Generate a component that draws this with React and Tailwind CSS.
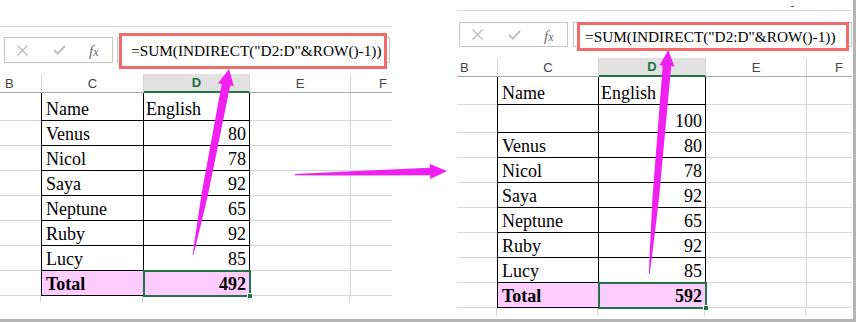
import React from 'react';

const MAGENTA = '#f020f0';

// Builds a tapered arrow outline: a shaft that widens along a width profile, then a head.
function arrowPoints(tail, tip, headLen, headHalf, profile) {
  const dx = tip[0] - tail[0];
  const dy = tip[1] - tail[1];
  const L = Math.hypot(dx, dy);
  const ux = dx / L;
  const uy = dy / L;
  const nx = -uy;
  const ny = ux;
  const shaftLen = L - headLen;
  const a = [];
  const b = [];
  profile.forEach(([t, w]) => {
    const cx = tail[0] + ux * shaftLen * t;
    const cy = tail[1] + uy * shaftLen * t;
    a.push([cx + (nx * w) / 2, cy + (ny * w) / 2]);
    b.push([cx - (nx * w) / 2, cy - (ny * w) / 2]);
  });
  const bx = tail[0] + ux * shaftLen;
  const by = tail[1] + uy * shaftLen;
  const pts = [
    ...a,
    [bx + nx * headHalf, by + ny * headHalf],
    tip,
    [bx - nx * headHalf, by - ny * headHalf],
    ...b.reverse(),
  ];
  return pts.map((p) => p.map((v) => v.toFixed(1)).join(',')).join(' ');
}

function CancelIcon() {
  return (
    <svg width="11" height="11" viewBox="0 0 11 11">
      <path d="M0.5 0.5L10.5 10.5M10.5 0.5L0.5 10.5" stroke="#b8b8b8" strokeWidth="1.3" fill="none" />
    </svg>
  );
}

function EnterIcon() {
  return (
    <svg width="13" height="10" viewBox="0 0 13 10">
      <path d="M1 5L4.8 8.6L12 1" stroke="#c0c0c0" strokeWidth="2" fill="none" />
    </svg>
  );
}

function FxIcon() {
  return (
    <span className="font-['Liberation_Serif',serif] italic text-[15px] leading-none text-[#6a6a6a]">
      f<span className="text-[12px]">x</span>
    </span>
  );
}

const FORMULA = '=SUM(INDIRECT("D2:D"&ROW()-1))';

function Sheet({ s, rows }) {
  return (
    <div className={`${s.width} flex flex-col shrink-0`}>
      {s.top}
      <div className="h-px bg-[#dadada]" />

      {/* formula bar */}
      <div className={`relative flex ${s.bar}`}>
        <div className="w-[109px] h-full border border-[#c6c6c6] flex items-center pl-[12px]">
          <CancelIcon />
          <div className="ml-[25px]">
            <EnterIcon />
          </div>
          <div className="ml-[23px]">
            <FxIcon />
          </div>
        </div>
        <div className={`flex-1 h-full border border-[#c6c6c6] ${s.inputGap}`} />
        <div
          className={`absolute ${s.red} border-[3px] border-[#f26a6a] bg-white flex items-center font-['Liberation_Serif','Times_New_Roman',serif] text-[15.3px] leading-none text-black whitespace-nowrap`}
        >
          {FORMULA}
        </div>
      </div>

      {/* column headers */}
      <div className="flex h-[19px] mt-[11px] font-['Liberation_Sans',Arial,sans-serif] text-[13px] leading-none text-[#444]">
        <div className={`${s.hLead} border-r border-r-[#d6d6d6] border-b border-b-[#ababab] flex items-center ${s.bPad}`}>B</div>
        <div className={`${s.hC} border-r border-r-[#d6d6d6] border-b border-b-[#ababab] flex items-center justify-center`}>C</div>
        <div className={`${s.hD} bg-[#e1e1e1] border-r border-r-[#d6d6d6] border-b-2 border-b-[#217346] flex items-center justify-center text-[#217346] font-bold`}>D</div>
        <div className={`${s.hE} border-r border-r-[#d6d6d6] border-b border-b-[#ababab] flex items-center justify-center`}>E</div>
        <div className="flex-1 border-b border-b-[#ababab] flex items-center pl-[28px]">F</div>
      </div>

      {/* cells */}
      <div className="font-['Liberation_Serif','Times_New_Roman',serif] text-[18px] leading-none text-black">
        {rows.map((r, i) => (
          <div key={i} className={`flex ${r.tall ? 'h-[28px]' : 'h-[25px]'}`}>
            <div className={`${s.lead} border-b border-[#d6d6d6]`} />
            <div
              className={`${s.c} border-l border-r border-b border-black flex items-end pl-[4px] pb-[2px] ${r.total ? 'bg-[#ffccff] font-bold' : ''}`}
            >
              {r.name}
            </div>
            <div
              className={`relative ${s.d} border-r border-b border-black flex items-end pb-[2px] ${r.head ? 'pl-[2px]' : 'justify-end pr-[3px]'} ${r.total ? 'bg-[#ffccff] font-bold' : ''}`}
            >
              {r.val}
              {r.total && (
                <div className="absolute -left-[1px] -top-[1px] -right-[2px] -bottom-[2px] border-2 border-[#217346]">
                  <div className="absolute -right-[4px] -bottom-[4px] w-[6px] h-[6px] bg-[#217346] border border-white" />
                </div>
              )}
            </div>
            <div className={`${s.e} border-r border-b border-[#d6d6d6]`} />
            <div className="flex-1 border-b border-[#d6d6d6]" />
          </div>
        ))}
        <div className={`flex ${s.tail}`}>
          <div className={`${s.lead} border-r border-[#d6d6d6]`} />
          <div className={`${s.cTail} border-r border-[#d6d6d6]`} />
          <div className={`${s.d} border-r border-[#d6d6d6]`} />
          <div className={`${s.e} border-r border-[#d6d6d6]`} />
        </div>
      </div>
    </div>
  );
}

const scores = [
  ['Venus', '80'],
  ['Nicol', '78'],
  ['Saya', '92'],
  ['Neptune', '65'],
  ['Ruby', '92'],
  ['Lucy', '85'],
];

const leftRows = [
  { name: 'Name', val: 'English', head: true, tall: true },
  ...scores.map(([name, val]) => ({ name, val })),
  { name: 'Total', val: '492', total: true },
];

const rightRows = [
  { name: 'Name', val: 'English', head: true, tall: true },
  { name: '', val: '100', tall: true },
  ...scores.map(([name, val]) => ({ name, val })),
  { name: 'Total', val: '592', total: true },
];

const leftSheet = {
  width: 'w-[392px]',
  top: <div className="h-[26px]" />,
  bar: 'mt-[10px] h-[26px] pl-[4px]',
  inputGap: 'ml-[4px] mr-[2px]',
  red: 'left-[119px] -top-[4px] w-[268px] h-[36px] pl-[9px]',
  bPad: 'pl-[5px]',
  hLead: 'w-[42px]',
  hC: 'w-[102px]',
  hD: 'w-[106px]',
  hE: 'w-[101px]',
  lead: 'w-[41px]',
  c: 'w-[103px]',
  cTail: 'w-[102px]',
  d: 'w-[106px]',
  e: 'w-[101px]',
  tail: 'h-[6px]',
};

const rightSheet = {
  width: 'w-[395px]',
  top: (
    <div className="h-[10px] flex items-start">
      <div className="ml-[334px] mt-[6px] w-[3px] h-px bg-[#555]" />
    </div>
  ),
  bar: 'mt-[11px] h-[25px] pl-[2px]',
  inputGap: 'ml-[5px]',
  red: 'left-[120px] top-0 w-[272px] h-[29px] pl-[5px]',
  bPad: 'pl-[3px]',
  hLead: 'w-[41px]',
  hC: 'w-[101px]',
  hD: 'w-[107px]',
  hE: 'w-[101px]',
  lead: 'w-[40px]',
  c: 'w-[102px]',
  cTail: 'w-[101px]',
  d: 'w-[107px]',
  e: 'w-[101px]',
  tail: 'h-[8px]',
};

export default function App() {
  const profile = [
    [0, 0.8],
    [0.12, 3],
    [0.36, 6.5],
    [1, 8.6],
  ];
  return (
    <div className="relative w-[856px] h-[322px] bg-white overflow-hidden border-r-[3px] border-b-[3px] border-[#b4b4b4]">
      <div className="flex items-start">
        <Sheet s={leftSheet} rows={leftRows} />
        <div className="w-[65px] shrink-0" />
        <Sheet s={rightSheet} rows={rightRows} />
      </div>

      {/* pointer arrows drawn over the sheets */}
      <svg className="absolute left-0 top-0 pointer-events-none" width="856" height="322" viewBox="0 0 856 322">
        <polygon fill={MAGENTA} points={arrowPoints([193, 255], [229, 69], 16, 8, profile)} />
        <polygon
          fill={MAGENTA}
          points={arrowPoints([295, 174.6], [447, 171], 17, 7.5, [
            [0, 1.2],
            [0.38, 4],
            [1, 7.5],
          ])}
        />
        <polygon fill={MAGENTA} points={arrowPoints([649.3, 274], [668.3, 50], 16, 7.5, profile)} />
      </svg>
    </div>
  );
}
